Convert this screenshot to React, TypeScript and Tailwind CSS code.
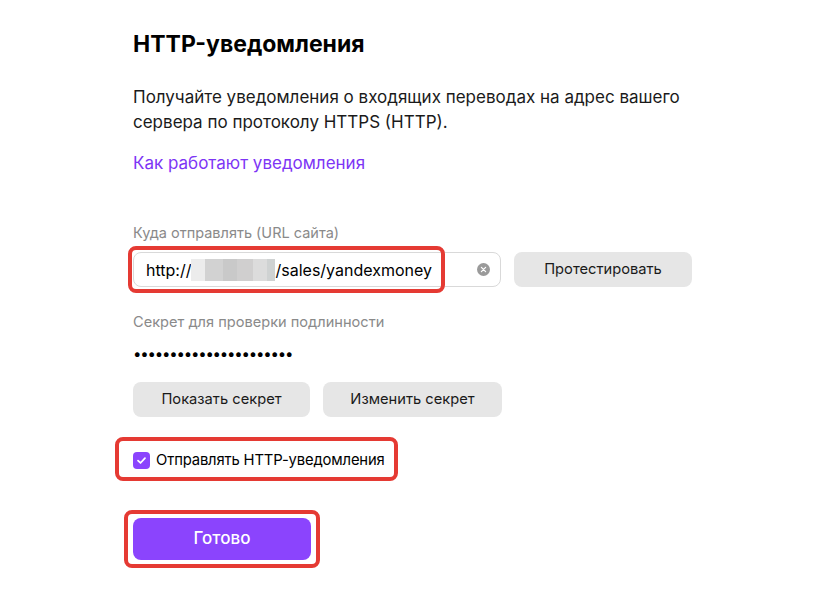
import { useState } from "react";

const Annotation = ({ className }: { className: string }) => (
    <div
        className={`pointer-events-none absolute rounded-[8px] border-[4px] border-[#e53a33] ${className}`}
    />
);

const GrayButton = ({ children, className = "" }: { children: string; className?: string }) => (
    <button
        className={`h-[35px] rounded-[8px] bg-[#e6e6e6] text-[14.7px] text-[#1a1a1a] ${className}`}
    >
        {children}
    </button>
);

const App = () => {
    const [sendHttp, setSendHttp] = useState(true);

    return (
        <div className="min-h-screen bg-white pl-[133px] pt-[28px] font-['Inter',sans-serif] text-[#1a1a1a]">
            <h1 className="text-[23px] font-bold leading-[32px] text-black">HTTP-уведомления</h1>

            <p className="mt-[25px] w-[570px] text-[17px] leading-[25px]">
                Получайте уведомления о входящих переводах на адрес вашего сервера по
                протоколу HTTPS (HTTP).
            </p>

            <a className="mt-[16px] block text-[17px] leading-[25px] text-[#7d35f5]" href="#">
                Как работают уведомления
            </a>

            <div className="mt-[47px] text-[14.5px] leading-[20px] text-[#8a8a8a]">
                Куда отправлять (URL сайта)
            </div>

            <div className="relative mt-[9px] flex gap-[13px]">
                <div className="flex h-[35px] w-[368px] items-center rounded-[8px] border border-[#d9d9d9] pl-[12px] pr-[10px]">
                    <span className="flex flex-1 items-center text-[16px] text-black">
                        http://
                        <span className="flex h-[22px]">
                            <span className="w-[14px] bg-[#ececec]" />
                            <span className="w-[18px] bg-[#d2d2d2]" />
                            <span className="w-[14px] bg-[#c9c9c9]" />
                            <span className="w-[16px] bg-[#d0cfcf]" />
                            <span className="w-[14px] bg-[#dcdcdc]" />
                            <span className="w-[8px] bg-[#cfd2d2]" />
                        </span>
                        /sales/yandexmoney
                    </span>
                    <span className="flex h-[13px] w-[13px] items-center justify-center rounded-full bg-[#9a9a9a]">
                        <svg viewBox="0 0 10 10" className="h-[7px] w-[7px]">
                            <path d="M2 2 L8 8 M8 2 L2 8" stroke="white" strokeWidth="1.8" strokeLinecap="round" />
                        </svg>
                    </span>
                </div>
                <GrayButton className="w-[178px]">Протестировать</GrayButton>
                <Annotation className="left-[-5px] top-[-6px] h-[47px] w-[317px]" />
            </div>

            <div className="mt-[25px] text-[14.6px] leading-[20px] text-[#8a8a8a]">
                Секрет для проверки подлинности
            </div>
            <div className="mt-[12px] text-[15px] leading-[20px] tracking-[-1.2px] text-black">
                ••••••••••••••••••••••
            </div>

            <div className="mt-[18px] flex gap-[13px]">
                <GrayButton className="w-[177px]">Показать секрет</GrayButton>
                <GrayButton className="w-[179px]">Изменить секрет</GrayButton>
            </div>

            <div className="relative mt-[31px] w-fit">
                <label className="flex h-[24px] cursor-pointer items-center gap-[6px] text-[14.8px] tracking-[-0.15px] text-black">
                    <input
                        type="checkbox"
                        className="sr-only"
                        checked={sendHttp}
                        onChange={() => setSendHttp(v => !v)}
                    />
                    <span className="flex h-[17px] w-[17px] items-center justify-center rounded-[4px] bg-[#8b44fd]">
                        {sendHttp && (
                            <svg viewBox="0 0 12 12" className="h-[11px] w-[11px]">
                                <path d="M2.2 6.2 L4.9 8.7 L9.8 3.4" fill="none" stroke="white" strokeWidth="1.9" strokeLinecap="round" strokeLinejoin="round" />
                            </svg>
                        )}
                    </span>
                    Отправлять HTTP-уведомления
                </label>
                <Annotation className="left-[-18px] top-[-11px] h-[44px] w-[283px]" />
            </div>

            <div className="relative mt-[46px] w-fit">
                <button className="h-[42px] w-[178px] rounded-[8px] bg-[#8b44fd] text-[17px] font-medium text-white">
                    Готово
                </button>
                <Annotation className="left-[-9px] top-[-8px] h-[58px] w-[196px]" />
            </div>
        </div>
    );
};

export default App;
